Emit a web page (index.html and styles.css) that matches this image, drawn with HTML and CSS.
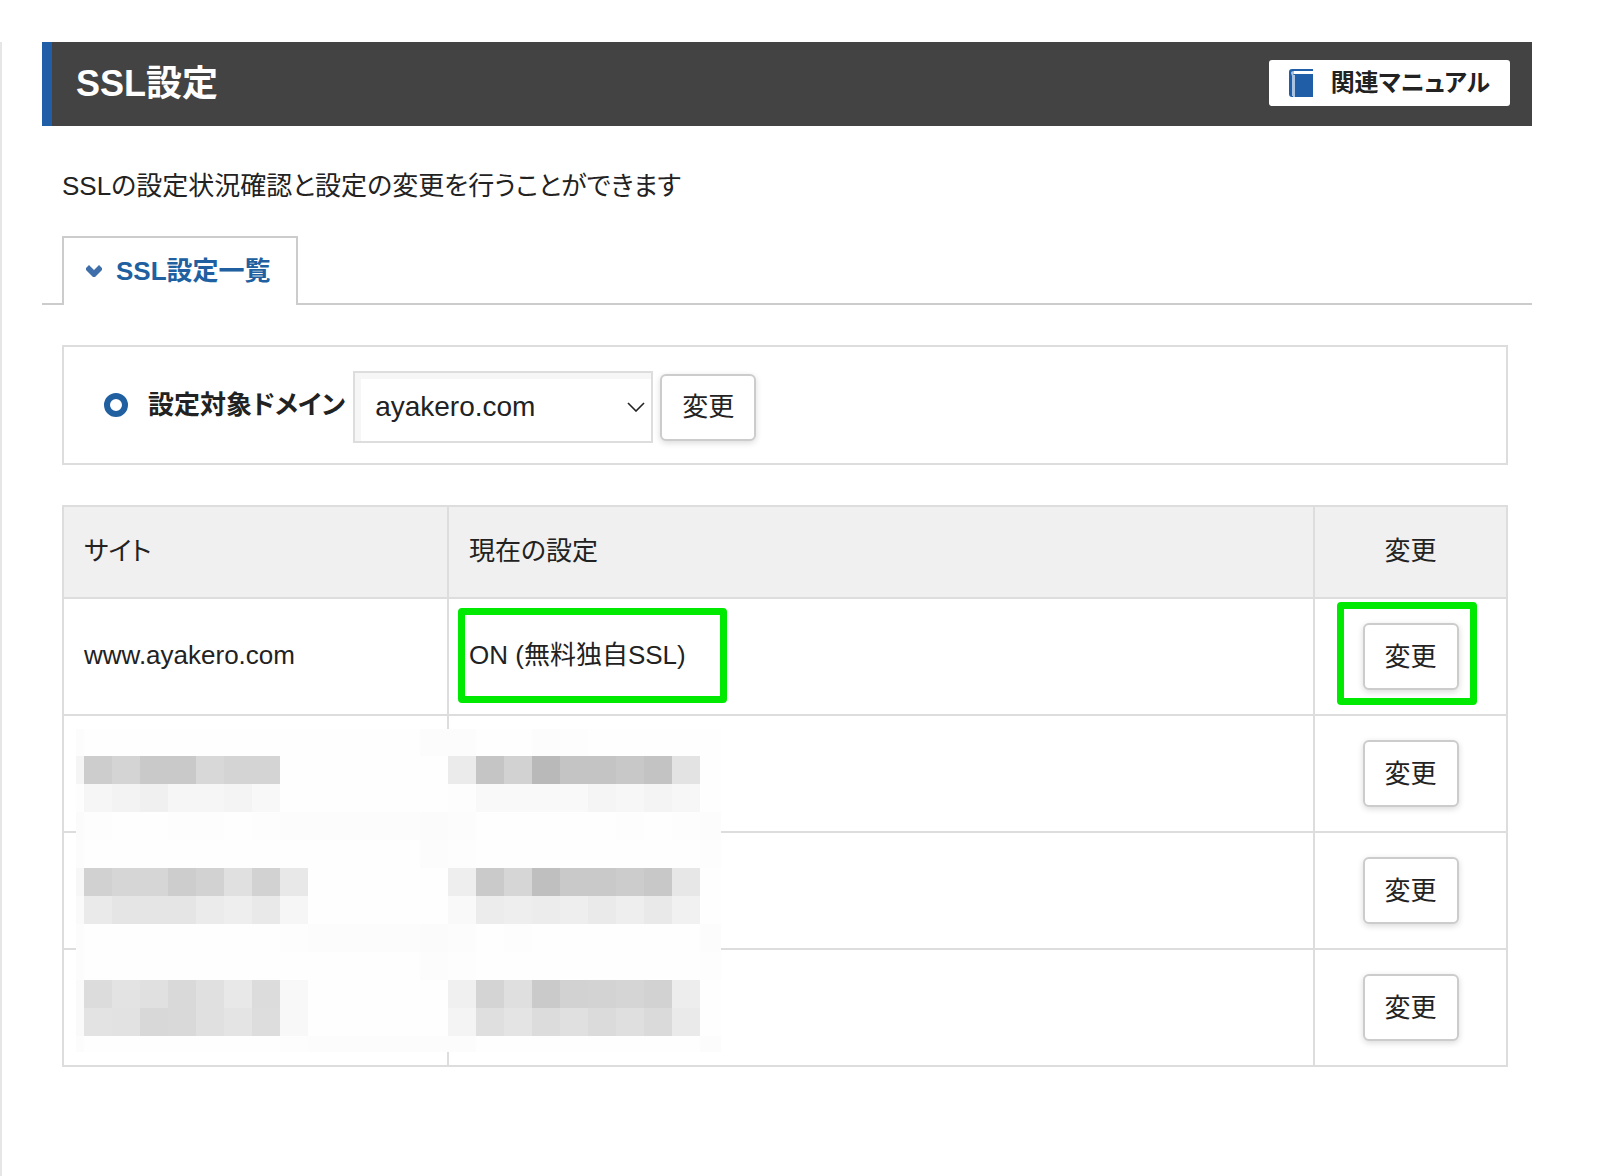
FILE: index.html
```html
<!DOCTYPE html>
<html lang="ja">
<head>
<meta charset="utf-8">
<meta name="viewport" content="width=device-width, initial-scale=1">
<title>SSL設定</title>
<link rel="stylesheet" href="styles.css">
</head>
<body>
<main class="page">
  <header class="page-header">
    <h1 class="page-title">SSL設定</h1>
    <a class="manual-link" href="#manual">
      <svg class="manual-icon" width="24" height="28" viewBox="0 0 24 28" aria-hidden="true">
        <path d="M3 0H24V28H3Q0 28 0 25V3Q0 0 3 0Z" fill="#205fa8"/>
        <path d="M5 2H24V5H5Z" fill="#fff"/>
        <path d="M2 4Q2 2 5 2V5Q4 5 4 7V27H3V7Z" fill="#a9c3e0"/>
        <path d="M4 6H6V28H4Z" fill="#a9c3e0"/>
      </svg>
      関連マニュアル
    </a>
  </header>

  <p class="lead">SSLの設定状況確認と設定の変更を行うことができます</p>

  <nav class="tabs">
    <a class="tab" href="#list">
      <svg width="16" height="12" viewBox="0 0 16 12" aria-hidden="true"><path d="M0 3L3 0L8 5L13 0L16 3V5L9 12H7L0 5Z" fill="#3f6fab"/></svg>
      SSL設定一覧
    </a>
  </nav>

  <div class="content" id="list">
    <form class="domain-form">
      <label class="domain-label" for="domain">設定対象ドメイン</label>
      <span class="select-wrap">
        <select class="domain-select" id="domain"><option>ayakero.com</option></select>
        <svg class="select-arrow" width="18" height="10" viewBox="0 0 18 10" aria-hidden="true"><path d="M1 1L9 9L17 1" fill="none" stroke="#222" stroke-width="1.6"/></svg>
      </span>
      <button class="button" type="button">変更</button>
    </form>

    <div class="table-wrap">
      <table class="ssl-table">
        <colgroup><col class="col-site"><col><col class="col-action"></colgroup>
        <thead>
          <tr><th scope="col">サイト</th><th scope="col">現在の設定</th><th scope="col" class="action">変更</th></tr>
        </thead>
        <tbody>
          <tr>
            <td>www.ayakero.com</td>
            <td><span class="marked marked-status">ON (無料独自SSL)</span></td>
            <td class="action"><span class="marked marked-action"><button class="button" type="button">変更</button></span></td>
          </tr>
          <tr><td></td><td></td><td class="action"><button class="button" type="button">変更</button></td></tr>
          <tr><td></td><td></td><td class="action"><button class="button" type="button">変更</button></td></tr>
          <tr><td></td><td></td><td class="action"><button class="button" type="button">変更</button></td></tr>
        </tbody>
      </table>
      <svg class="mosaic" id="mosaic" width="645" height="323" viewBox="76 729 645 323" shape-rendering="crispEdges" aria-hidden="true">
        <rect x="76" y="729" width="645" height="323" fill="#fefefe"/>
      </svg>
    </div>
  </div>
</main>
<script src="mosaic.js"></script>
</body>
</html>
```
FILE: styles.css
```css
*,
*::before,
*::after {
  box-sizing: border-box;
}

body {
  margin: 0;
  padding-top: 42px;
  background: #fff;
  color: #222;
  font-family: "Liberation Sans", "Noto Sans CJK JP", sans-serif;
  font-size: 26px;
  line-height: 40px;
  font-feature-settings: "palt";
}

.page {
  min-height: calc(100vh - 42px);
  padding: 0 92px 40px 40px;
  border-left: 2px solid #e6e6e6;
}

.page-header {
  display: flex;
  align-items: center;
  justify-content: space-between;
  min-height: 84px;
  padding: 0 22px 0 24px;
  border-left: 10px solid #205fa8;
  background: #434343;
}

.page-title {
  margin: 0;
  color: #fff;
  font-size: 36px;
  line-height: 48px;
}

.manual-link {
  display: flex;
  align-items: center;
  gap: 18px;
  height: 46px;
  margin-bottom: 2px;
  padding: 0 20px;
  border-radius: 3px;
  background: #fff;
  color: #222;
  font-size: 24px;
  font-weight: bold;
  text-decoration: none;
}

.lead {
  margin: 0;
  padding: 40px 20px 10px;
}

.tabs {
  display: flex;
  margin-top: 20px;
  padding-left: 20px;
  border-bottom: 2px solid #ccc;
}

.tab {
  display: flex;
  align-items: center;
  gap: 14px;
  height: 69px;
  margin-bottom: -2px;
  padding: 0 25px 2px 22px;
  border: 2px solid #ccc;
  border-bottom: 0;
  background: #fff;
  color: #205fa0;
  font-weight: bold;
  text-decoration: none;
}

.content {
  padding: 40px 24px 0 20px;
}

.domain-form {
  display: flex;
  align-items: center;
  min-height: 120px;
  padding: 4px 40px 0;
  border: 2px solid #ddd;
}

.domain-label {
  display: flex;
  align-items: center;
  gap: 20px;
  margin-right: 8px;
  padding-bottom: 4px;
  font-weight: bold;
}

.domain-label::before {
  content: "";
  width: 24px;
  height: 24px;
  border: 6px solid #205fa0;
  border-radius: 50%;
}

.select-wrap {
  position: relative;
  margin-right: 7px;
}

.domain-select {
  display: block;
  width: 300px;
  height: 72px;
  padding: 0 40px 0 20px;
  border: 2px solid #ddd;
  border-radius: 0;
  appearance: none;
  background: #fff;
  box-shadow: inset 6px 6px 0 #f6f6f6;
  color: #222;
  font: inherit;
  font-size: 28px;
}

.select-arrow {
  position: absolute;
  top: 31px;
  right: 8px;
  pointer-events: none;
}

.button {
  display: block;
  width: 96px;
  height: 67px;
  padding: 0;
  border: 2px solid #ccc;
  border-radius: 6px;
  background: #fff;
  box-shadow: 0 2px 6px rgba(0, 0, 0, 0.15);
  color: #222;
  font: inherit;
  font-feature-settings: inherit;
}

.table-wrap {
  position: relative;
  margin-top: 40px;
}

.ssl-table {
  width: 100%;
  border-collapse: collapse;
  table-layout: fixed;
}

.col-site {
  width: 385px;
}

.col-action {
  width: 193px;
}

.ssl-table th,
.ssl-table td {
  padding: 22px 20px 26px;
  border: 2px solid #ddd;
  font-weight: normal;
  text-align: left;
}

.ssl-table th {
  padding: 24px 20px 26px;
  background: #f0f0f0;
}

.ssl-table .action {
  text-align: center;
}

.ssl-table td.action {
  padding: 24px 20px;
}

.action .button {
  margin: 0 auto;
}

.marked {
  display: inline-block;
  position: relative;
  vertical-align: top;
}

.marked::after {
  content: "";
  position: absolute;
  border: 7px solid #00e900;
  border-radius: 4px;
  pointer-events: none;
}

.marked-status::after {
  inset: -27px -41px -28px -11px;
}

.marked-action::after {
  inset: -21px -18px -15px -26px;
}

.mosaic {
  position: absolute;
  top: 224px;
  left: 14px;
}
```
FILE: mosaic.js
```js
// Each run is [x, y, grey levels in hex]; every level fills one 28px tile.
const TILE = 28;
const runs = [
  [420, 728, "fc fc fe fe fc fd"],
  [84, 756, "cd d4 c9 c9 d8 d4 d4"],
  [448, 756, "eb c5 d2 b9 c4 c4 c8 c3 e3"],
  [84, 784, "f6 f3 f0 f6 f6 f4 f8"],
  [448, 784, "fd f9 f9 f9 f9 f5 f7 f4 f7"],
  [84, 812, "fd fe fe fd fd fe fd fc fc fc fc fc fb fc fe fe fe fe fe fd fe fd fc"],
  [420, 840, "fc fd"],
  [700, 840, "fd"],
  [84, 868, "d1 d6 d6 cd d2 e0 d2 e8"],
  [448, 868, "ee ca d6 bf c9 c9 cc c8 e7"],
  [84, 896, "ea e5 e5 e5 eb ee e9 f6"],
  [448, 896, "f9 ec ee ec ee ea ee e9 f1"],
  [280, 924, "fd fc fc fc fc fb fc fe fd"],
  [700, 924, "fc"],
  [420, 952, "fc fd"],
  [700, 952, "fd"],
  [84, 980, "dc e3 e0 d9 e0 e8 dc f8"],
  [448, 980, "f0 d4 df ca d2 d3 d5 d2 ed"],
  [84, 1008, "e3 e2 d8 d9 e0 e4 dd f8"],
  [448, 1008, "f4 df e4 dc e0 db df da ea"],
  [280, 1036, "fd fc fc fc fc fc fc"],
  [700, 1036, "fc"],
  [56, 728, "fc"], [56, 756, "f5"], [56, 784, "fd"], [56, 812, "fb"],
  [56, 840, "fc"], [56, 868, "f7"], [56, 896, "fa"], [56, 924, "fc"],
  [56, 952, "fc"], [56, 980, "fa"], [56, 1008, "fa"], [56, 1036, "fc"]
];
const mosaic = document.getElementById("mosaic");
for (const [x, y, levels] of runs) {
  levels.split(" ").forEach((level, i) => {
    const tile = document.createElementNS("http://www.w3.org/2000/svg", "rect");
    tile.setAttribute("x", x + i * TILE);
    tile.setAttribute("y", y);
    tile.setAttribute("width", TILE);
    tile.setAttribute("height", TILE);
    tile.setAttribute("fill", "#" + level.repeat(3));
    mosaic.append(tile);
  });
}
```
